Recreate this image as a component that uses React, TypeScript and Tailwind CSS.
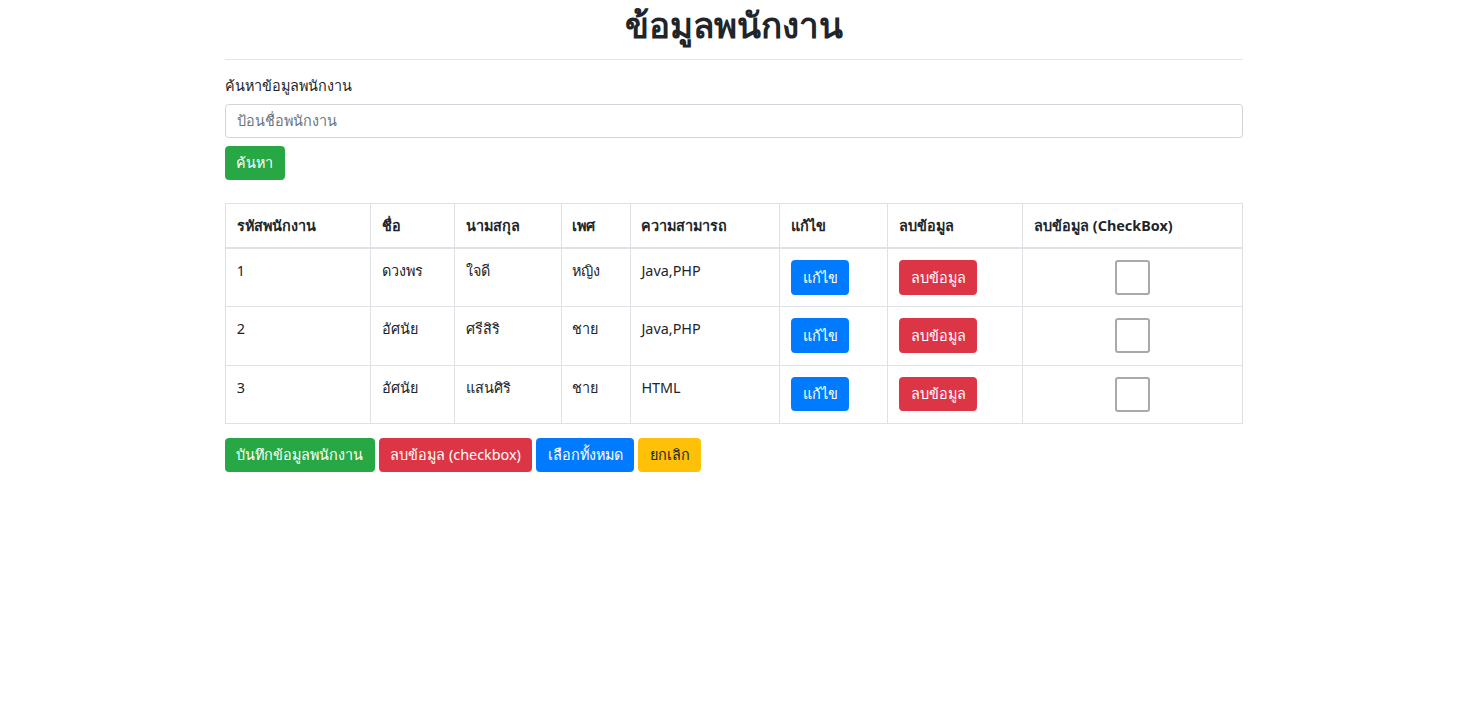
const employees = [
  { id: "1", first: "ดวงพร", last: "ใจดี", gender: "หญิง", skill: "Java,PHP" },
  { id: "2", first: "อัศนัย", last: "ศรีสิริ", gender: "ชาย", skill: "Java,PHP" },
  { id: "3", first: "อัศนัย", last: "แสนศิริ", gender: "ชาย", skill: "HTML" },
];

const headers = [
  { label: "รหัสพนักงาน", w: "w-[145px]" },
  { label: "ชื่อ", w: "w-[84px]" },
  { label: "นามสกุล", w: "w-[107px]" },
  { label: "เพศ", w: "w-[69px]" },
  { label: "ความสามารถ", w: "w-[150px]" },
  { label: "แก้ไข", w: "w-[108px]" },
  { label: "ลบข้อมูล", w: "w-[135px]" },
  { label: "ลบข้อมูล (CheckBox)", w: "w-[220px]" },
];

const th = "border border-[#dee2e6] p-[10.8px] align-top";
const td = "border border-[#dee2e6] px-[10.8px] pt-[11px] pb-[11.3px] align-top";
const btn = "rounded-[3.6px] border px-[10.4px] py-[5.4px] leading-[21.6px] text-[14.4px]";

export default function App() {
  return (
    <div className="min-h-screen bg-white text-[#212529] text-[14.4px] leading-[21.6px] font-['Noto_Sans',sans-serif]">
      <div className="mx-auto w-[1018px]">
        <h1 className="text-center text-[35px] leading-[43px] font-semibold pt-[3px]">ข้อมูลพนักงาน</h1>
        <hr className="mt-[13px] border-t border-[#e5e5e5]" />

        <div className="mt-[15px]">
          <label className="block mb-[7px]">ค้นหาข้อมูลพนักงาน</label>
          <input
            placeholder="ป้อนชื่อพนักงาน"
            className="w-full h-[34px] rounded-[3.6px] border border-[#ced4da] px-[10.8px] placeholder:text-[#6c757d] outline-none"
          />
          <button className={`${btn} mt-[8px] bg-[#28a745] border-[#28a745] text-white`}>ค้นหา</button>
        </div>

        <table className="mt-[23px] w-full border-collapse">
          <thead>
            <tr>
              {headers.map((h) => (
                <th key={h.label} className={`${th} ${h.w} border-b-2 text-left font-bold`}>
                  {h.label}
                </th>
              ))}
            </tr>
          </thead>
          <tbody>
            {employees.map((e) => (
              <tr key={e.id}>
                <td className={td}>{e.id}</td>
                <td className={td}>{e.first}</td>
                <td className={td}>{e.last}</td>
                <td className={td}>{e.gender}</td>
                <td className={td}>{e.skill}</td>
                <td className={td}>
                  <button className={`${btn} bg-[#007bff] border-[#007bff] text-white`}>แก้ไข</button>
                </td>
                <td className={td}>
                  <button className={`${btn} bg-[#dc3545] border-[#dc3545] text-white`}>ลบข้อมูล</button>
                </td>
                <td className={`${td} text-center`}>
                  <span className="inline-block w-[35px] h-[35px] rounded-[3px] border-2 border-[#a9a9a9] bg-white align-top" />
                </td>
              </tr>
            ))}
          </tbody>
        </table>

        <div className="mt-[14px] flex gap-[4px]">
          <button className={`${btn} bg-[#28a745] border-[#28a745] text-white`}>บันทึกข้อมูลพนักงาน</button>
          <button className={`${btn} bg-[#dc3545] border-[#dc3545] text-white`}>ลบข้อมูล (checkbox)</button>
          <button className={`${btn} bg-[#007bff] border-[#007bff] text-white`}>เลือกทั้งหมด</button>
          <button className={`${btn} bg-[#ffc107] border-[#ffc107] text-[#212529]`}>ยกเลิก</button>
        </div>
      </div>
    </div>
  );
}
